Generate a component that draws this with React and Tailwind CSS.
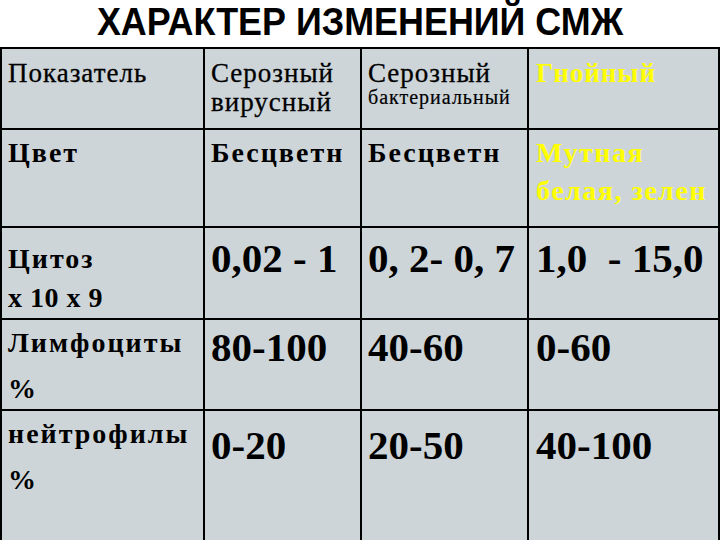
const serif = { fontFamily: '"Liberation Serif", "Times New Roman", serif' };

function Cell({ children, className = "" }) {
  return (
    <div className={`bg-[#cdd5d9] pl-[6px] overflow-hidden whitespace-nowrap ${className}`}>
      {children}
    </div>
  );
}

export default function App() {
  const label = "text-[28px] font-bold tracking-[2px] text-black";
  const head = "text-[27px] leading-[29px] tracking-[1px] text-black [-webkit-text-stroke:0.3px_black]";
  const num = "text-[41px] font-bold leading-[46px] text-black";
  const yellow = "text-[#ffff00]";

  return (
    <div className="w-[720px] h-[540px] bg-white overflow-hidden" style={serif}>
      <div className="h-[47px] text-center">
        <span className="inline-block scale-x-[0.92] text-[39px] leading-[44px] font-bold text-black font-['Liberation_Sans',Arial,sans-serif]">
          ХАРАКТЕР ИЗМЕНЕНИЙ СМЖ
        </span>
      </div>

      <div className="h-[493px] bg-black pt-[2px] px-[2px] grid grid-cols-[201px_155px_165px_189px] grid-rows-[79px_96px_90px_89px_1fr] gap-[2px]">
        {/* header */}
        <Cell className={`pt-[10px] ${head}`}>Показатель</Cell>
        <Cell className={`pt-[10px] ${head}`}>
          <div>Серозный</div>
          <div>вирусный</div>
        </Cell>
        <Cell className="pt-[10px]">
          <div className={head}>Серозный</div>
          <div className="text-[20px] leading-[19px] tracking-[1px] [-webkit-text-stroke:0.2px_black]">бактериальный</div>
        </Cell>
        <Cell className={`pt-[10px] pl-[7px] text-[27px] leading-[29px] tracking-[1px] font-bold ${yellow}`}>Гнойный</Cell>

        {/* цвет */}
        <Cell className={`pt-[4px] leading-[38px] ${label}`}>Цвет</Cell>
        <Cell className={`pt-[4px] leading-[38px] ${label}`}>Бесцветн</Cell>
        <Cell className={`pt-[4px] leading-[38px] ${label}`}>Бесцветн</Cell>
        <Cell className={`pt-[4px] pl-[7px] leading-[38px] text-[28px] tracking-[1.5px] font-bold ${yellow}`}>
          <div>Мутная</div>
          <div>белая, зелен</div>
        </Cell>

        {/* цитоз */}
        <Cell className={`pt-[11px] leading-[39px] ${label}`}>
          <div>Цитоз</div>
          <div className="tracking-[0.5px]">х 10 х 9</div>
        </Cell>
        <Cell className={`pt-[7px] ${num}`}>0,02 - 1</Cell>
        <Cell className={`pt-[7px] ${num}`}>0, 2- 0, 7</Cell>
        <Cell className={`pt-[7px] pl-[7px] ${num} ${yellow}`}>1,0&nbsp; - 15,0</Cell>

        {/* лимфоциты */}
        <Cell className={`pt-0 leading-[46px] ${label}`}>
          <div>Лимфоциты</div>
          <div>%</div>
        </Cell>
        <Cell className={`pt-[4px] ${num}`}>80-100</Cell>
        <Cell className={`pt-[4px] ${num}`}>40-60</Cell>
        <Cell className={`pt-[4px] pl-[7px] ${num} ${yellow}`}>0-60</Cell>

        {/* нейтрофилы */}
        <Cell className={`pt-0 leading-[46px] ${label}`}>
          <div>нейтрофилы</div>
          <div>%</div>
        </Cell>
        <Cell className={`pt-[11px] ${num}`}>0-20</Cell>
        <Cell className={`pt-[11px] ${num}`}>20-50</Cell>
        <Cell className={`pt-[11px] pl-[7px] ${num} ${yellow}`}>40-100</Cell>
      </div>
    </div>
  );
}
